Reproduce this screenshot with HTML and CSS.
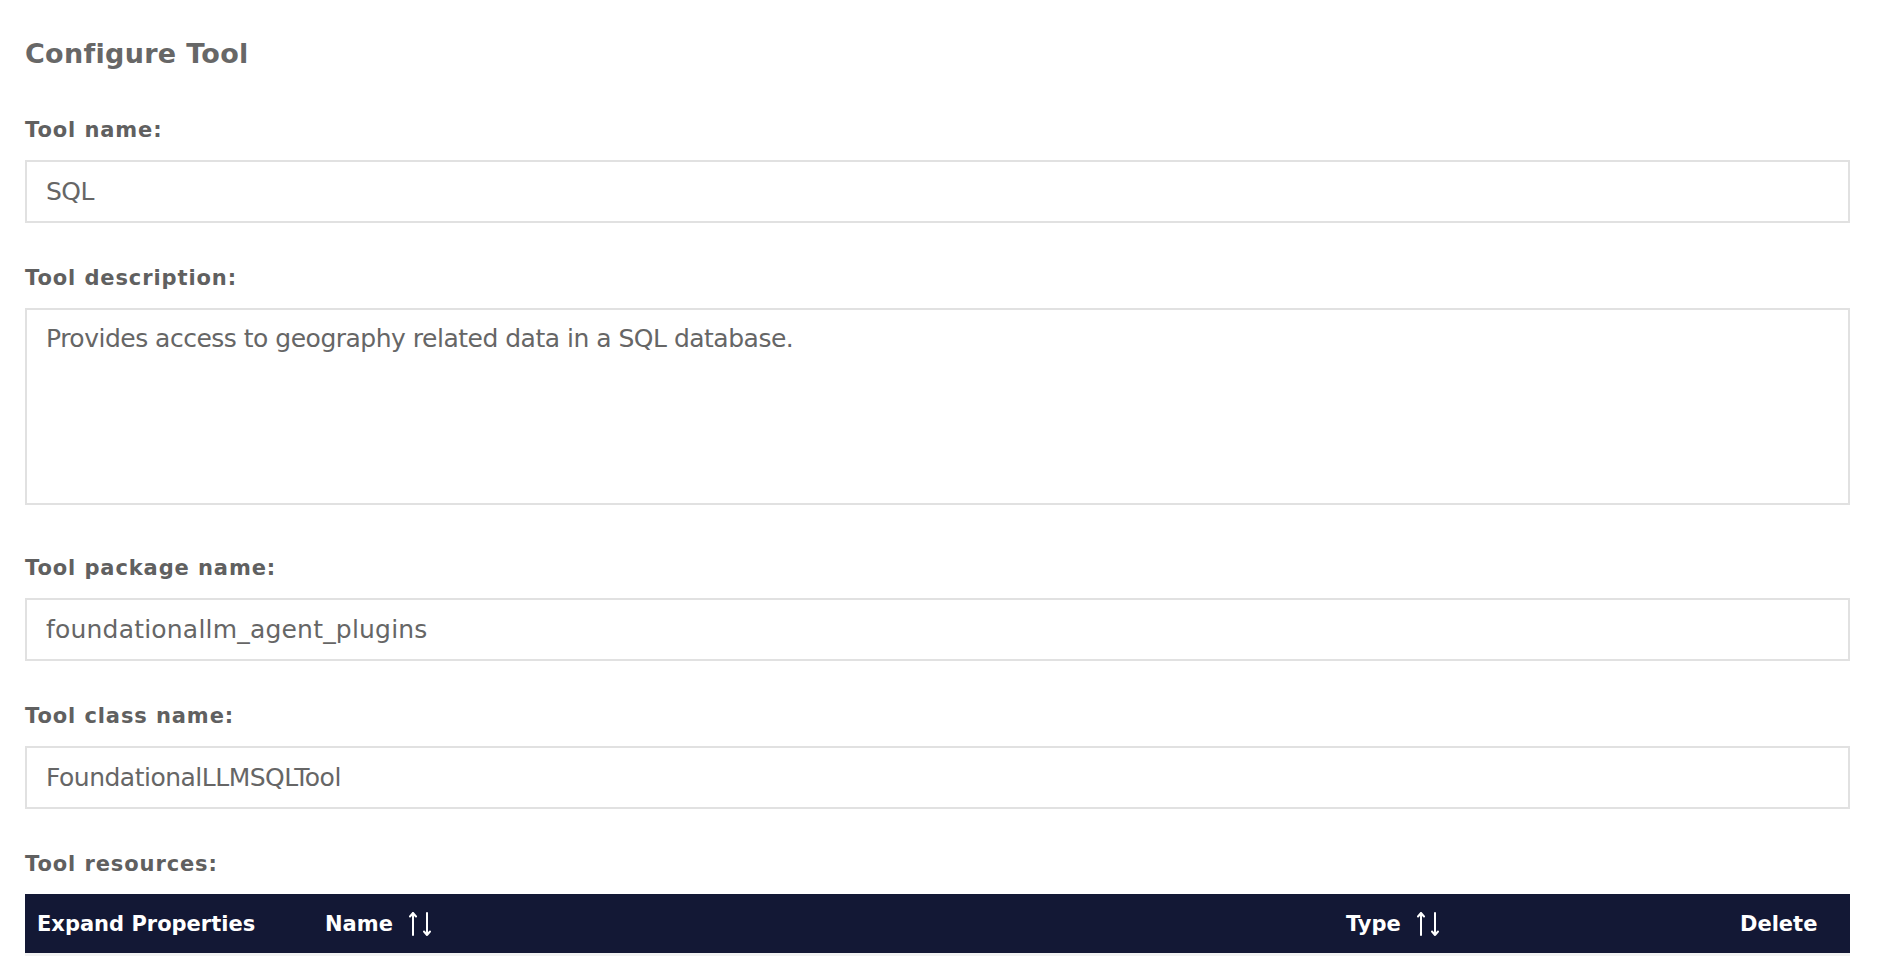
FILE: index.html
```html
<!DOCTYPE html>
<html lang="en">
<head>
<meta charset="utf-8">
<title>Configure Tool</title>
<link rel="stylesheet" href="styles.css">
</head>
<body>
<main class="page">
  <h1 class="title">Configure Tool</h1>

  <div class="field">
    <label class="label" for="tool-name">Tool name:</label>
    <input class="input" id="tool-name" type="text" value="SQL">
  </div>

  <div class="field">
    <label class="label" for="tool-desc">Tool description:</label>
    <textarea class="textarea" id="tool-desc">Provides access to geography related data in a SQL database.</textarea>
  </div>

  <div class="field field-after-area">
    <label class="label" for="tool-pkg">Tool package name:</label>
    <input class="input input-wide" id="tool-pkg" type="text" value="foundationallm_agent_plugins">
  </div>

  <div class="field">
    <label class="label" for="tool-class">Tool class name:</label>
    <input class="input" id="tool-class" type="text" value="FoundationalLLMSQLTool">
  </div>

  <div class="field">
    <div class="label">Tool resources:</div>
    <div class="table">
      <div class="thead">
        <div class="th">Expand Properties</div>
        <div class="th">Name
          <svg class="sort" viewBox="0 0 24 26" width="24" height="26" aria-hidden="true">
            <path d="M4 24V2M1 5.5L4 2l3 3.5" fill="none" stroke="#fff" stroke-width="2" stroke-linecap="round" stroke-linejoin="round"/>
            <path d="M18 2v22M15 20.5l3 3.5 3-3.5" fill="none" stroke="#fff" stroke-width="2" stroke-linecap="round" stroke-linejoin="round"/>
          </svg>
        </div>
        <div class="th">Type
          <svg class="sort" viewBox="0 0 24 26" width="24" height="26" aria-hidden="true">
            <path d="M4 24V2M1 5.5L4 2l3 3.5" fill="none" stroke="#fff" stroke-width="2" stroke-linecap="round" stroke-linejoin="round"/>
            <path d="M18 2v22M15 20.5l3 3.5 3-3.5" fill="none" stroke="#fff" stroke-width="2" stroke-linecap="round" stroke-linejoin="round"/>
          </svg>
        </div>
        <div class="th">Delete</div>
      </div>
      <div class="tbody-edge"></div>
    </div>
  </div>
</main>
</body>
</html>
```

FILE: styles.css
```css
* {
  box-sizing: border-box;
}

html, body {
  margin: 0;
  padding: 0;
  background: #ffffff;
}

body {
  font-family: "DejaVu Sans", "Liberation Sans", sans-serif;
  color: #666666;
}

.page {
  padding: 34px 30px 0 25px;
  display: flex;
  flex-direction: column;
}

.title {
  margin: 0;
  font-size: 27px;
  line-height: 40px;
  font-weight: 700;
  letter-spacing: 0.3px;
  color: #676767;
}

.field {
  display: flex;
  flex-direction: column;
  margin-top: 40px;
}

.title + .field {
  margin-top: 41px;
}

.field-after-area {
  margin-top: 48px;
}

.label {
  font-size: 21px;
  line-height: 30px;
  font-weight: 700;
  letter-spacing: 0.9px;
  color: #606060;
  margin-bottom: 15px;
}

.input,
.textarea {
  display: block;
  width: 100%;
  font-family: inherit;
  font-size: 25px;
  letter-spacing: -0.5px;
  color: #666666;
  background: #ffffff;
  border: 2px solid #e1e1e1;
  border-radius: 0;
  outline: none;
  margin: 0;
}

.input {
  height: 63px;
  padding: 0 19px;
}

.input-wide {
  letter-spacing: 0.2px;
}

.textarea {
  height: 197px;
  padding: 14px 19px;
  line-height: 30px;
  resize: none;
}

.table {
  display: flex;
  flex-direction: column;
}

.thead {
  display: grid;
  grid-template-columns: 288px 1021px 394px 1fr;
  height: 59px;
  background: #131835;
  align-items: center;
}

.th {
  display: flex;
  align-items: center;
  padding-left: 12px;
  font-size: 21px;
  font-weight: 700;
  color: #ffffff;
  white-space: nowrap;
}

.sort {
  margin-left: 16px;
  flex: none;
}

.tbody-edge {
  height: 3px;
  background: #f2f2f2;
}
```
